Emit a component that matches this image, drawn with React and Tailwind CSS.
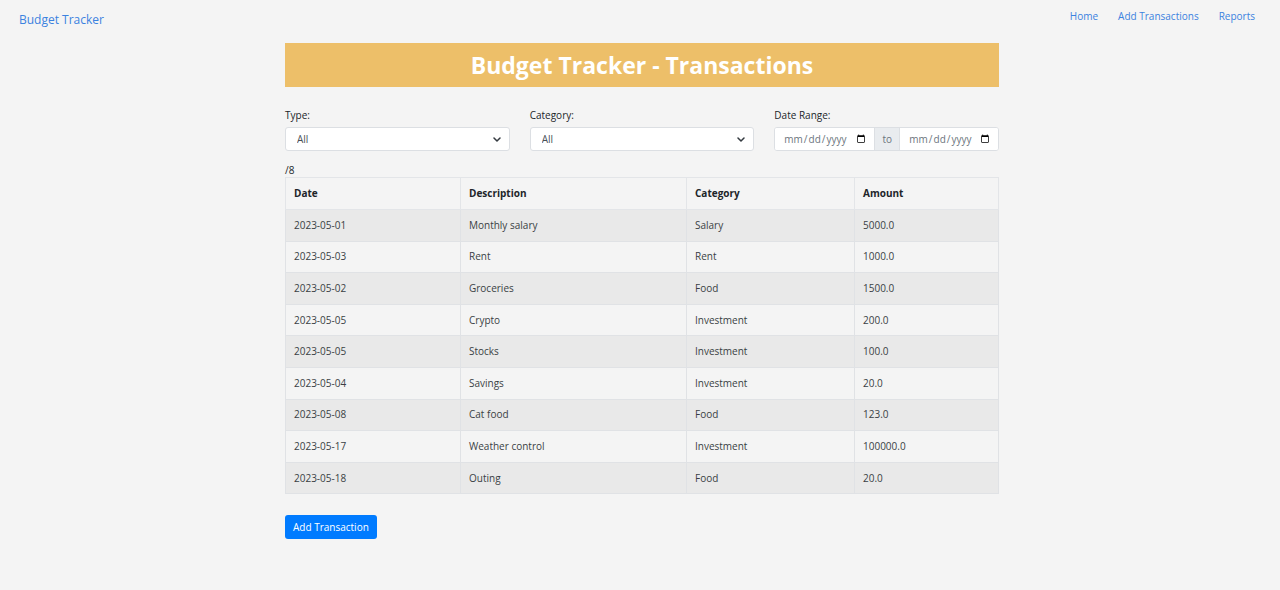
import React from 'react';

const rows = [
  ['2023-05-01', 'Monthly salary', 'Salary', '5000.0'],
  ['2023-05-03', 'Rent', 'Rent', '1000.0'],
  ['2023-05-02', 'Groceries', 'Food', '1500.0'],
  ['2023-05-05', 'Crypto', 'Investment', '200.0'],
  ['2023-05-05', 'Stocks', 'Investment', '100.0'],
  ['2023-05-04', 'Savings', 'Investment', '20.0'],
  ['2023-05-08', 'Cat food', 'Food', '123.0'],
  ['2023-05-17', 'Weather control', 'Investment', '100000.0'],
  ['2023-05-18', 'Outing', 'Food', '20.0'],
];

function Chevron() {
  return (
    <svg className="absolute right-[9px] top-[10px] w-[8px] h-[5px] pointer-events-none" viewBox="0 0 16 10">
      <path d="M2 2l6 6 6-6" fill="none" stroke="#343a40" strokeWidth="3" strokeLinecap="round" strokeLinejoin="round" />
    </svg>
  );
}

function Select({ label }) {
  return (
    <div className="flex flex-col">
      <label className="text-[10px] text-[#212529] h-[14px] mb-[5px] leading-[14px]">{label}</label>
      <div className="relative h-[24px]">
        <select className="block w-full h-[24px] appearance-none bg-white border border-[#dcdfe3] rounded-[3px] pl-[11px] text-[10px] text-[#495057] outline-none">
          <option>All</option>
        </select>
        <Chevron />
      </div>
    </div>
  );
}

export default function App() {
  return (
    <div className="min-h-[590px] bg-[#f4f4f4] text-[#212529]" style={{ fontFamily: '"Open Sans", "Noto Sans", sans-serif' }}>
      <nav className="flex justify-between items-start pl-[19px] pr-[25px] pt-[11px]">
        <a className="text-[12px] text-[#3b82e0] leading-[18px]">Budget Tracker</a>
        <div className="flex gap-[20px] text-[10px] text-[#3b82e0] leading-[14px] mt-[-2px]">
          <a>Home</a>
          <a>Add Transactions</a>
          <a>Reports</a>
        </div>
      </nav>

      <main className="w-[714px] ml-[285px] mt-[14px]">
        <h1 className="h-[44px] bg-[#edbf69] text-white text-center font-bold text-[23px] leading-[44px]">
          Budget Tracker - Transactions
        </h1>

        <div className="grid grid-cols-3 gap-[20px] mt-[21px]">
          <Select label="Type:" />
          <Select label="Category:" />
          <div className="flex flex-col">
            <label className="text-[10px] h-[14px] mb-[5px] leading-[14px]">Date Range:</label>
            <div className="flex h-[24px] border border-[#dcdfe3] rounded-[3px] bg-white overflow-hidden">
              <input type="date" className="w-[99px] pl-[8px] pr-[6px] text-[10px] text-[#6c757d] outline-none bg-white" />
              <span className="w-[26px] bg-[#e9ecef] text-[10px] text-[#6c757d] flex items-center justify-center border-x border-[#dcdfe3]">to</span>
              <input type="date" className="flex-1 min-w-0 pl-[8px] pr-[6px] text-[10px] text-[#6c757d] outline-none bg-white" />
            </div>
          </div>
        </div>

        <div className="text-[10px] mt-[12px] leading-[14px]">/8</div>

        <table className="w-full border-collapse text-[10px]">
          <thead>
            <tr className="h-[32px] bg-[#f4f4f4]">
              <th className="w-[175px] text-left font-bold px-[8px] border border-[#e3e5e8]">Date</th>
              <th className="w-[226px] text-left font-bold px-[8px] border border-[#e3e5e8]">Description</th>
              <th className="w-[168px] text-left font-bold px-[8px] border border-[#e3e5e8]">Category</th>
              <th className="text-left font-bold px-[8px] border border-[#e3e5e8]">Amount</th>
            </tr>
          </thead>
          <tbody>
            {rows.map((r, i) => (
              <tr key={i} className={i % 2 === 0 ? 'h-[31.6px] bg-[#e9e9e9]' : 'h-[31.6px] bg-[#f4f4f4]'}>
                {r.map((c, j) => (
                  <td key={j} className="px-[8px] border border-[#e0e2e5] text-[#3a3f44]">{c}</td>
                ))}
              </tr>
            ))}
          </tbody>
        </table>

        <button className="mt-[21px] h-[24px] px-[8px] bg-[#007bff] text-white text-[10px] rounded-[3px]">
          Add Transaction
        </button>
      </main>
    </div>
  );
}
